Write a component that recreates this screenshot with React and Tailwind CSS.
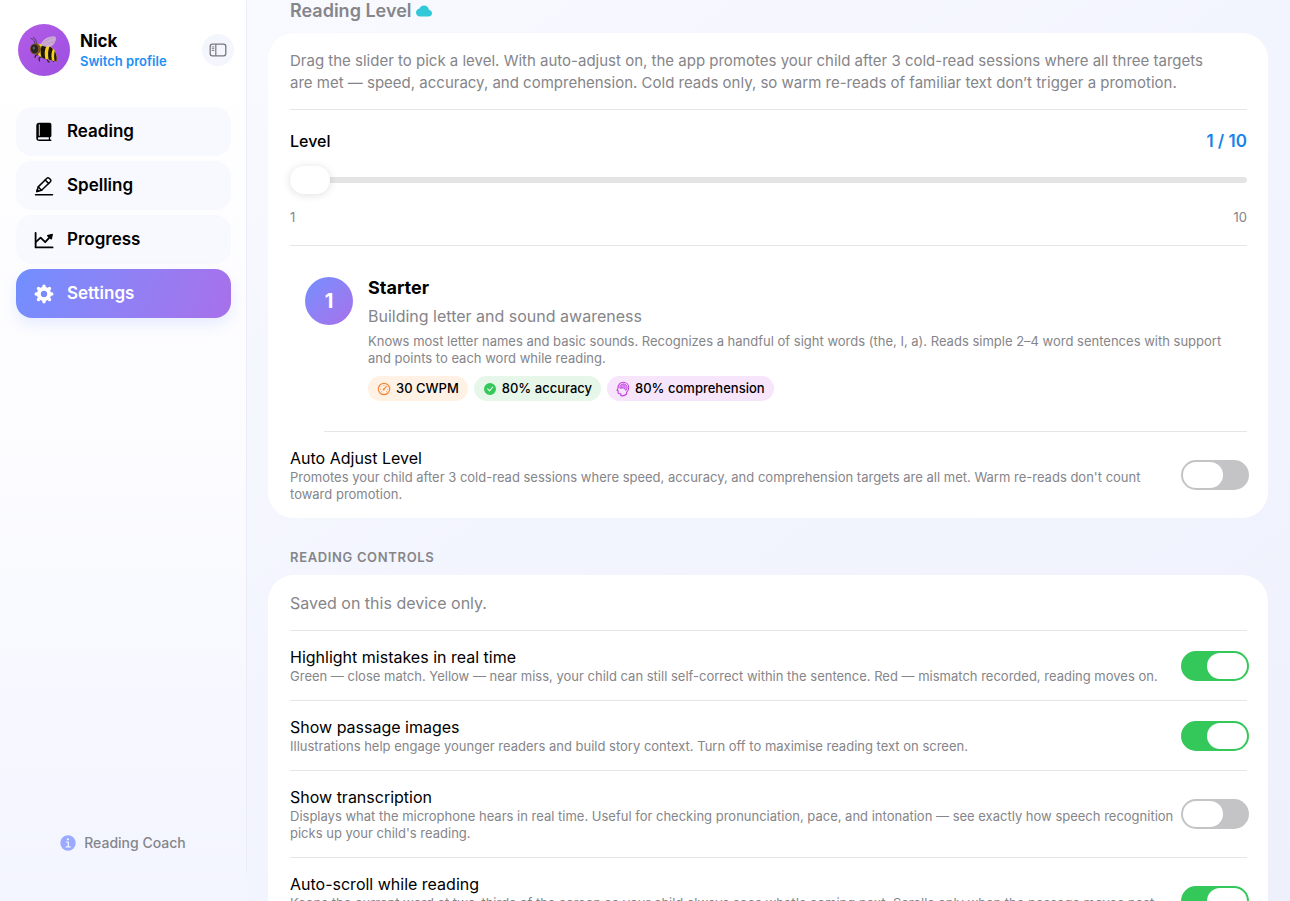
import { useState } from "react";
import { BsCheckCircleFill } from "react-icons/bs";
import { IoCloud } from "react-icons/io5";

function BeeIcon() {
  return (
    <svg viewBox="0 0 32 32" className="size-8" aria-hidden="true">
      <path d="M7 11.500C7 8.500 6.500 5 3 4.500M8.500 10.500C8.500 7.500 8 4.500 5.500 3.500" fill="none" stroke="#4b3a5c" strokeWidth="0.9" strokeLinecap="round" />
      <g stroke="#33250f" strokeWidth="1.200" strokeLinecap="round" strokeLinejoin="round" fill="none">
        <path d="M10 20.500l-2.500 1-.5 2" />
        <path d="M13 22.500l-2 2 .5 2.500" />
        <path d="M19 24l.5 2.500 1.500 1.500" />
        <path d="M24 25.500l1.500 2" />
      </g>
      <path d="M10 10.500C15 8.500 22 11 26 15.500c2.200 3.200 3.200 7.500 2.500 12-3.500-.6-6-1.400-10-2.400C13 23.500 9.500 21.500 9 18z" fill="#f6cf1c" />
      <path d="M14.500 10.200c2 .2 3.200.8 4.200 1.600-2.300 3.500-2.500 8.500-1.300 13.100-1.600-.5-2.800-1-4-1.700-1.400-4.600-1-9.200 1.100-13z" fill="#1d160e" />
      <path d="M21.600 12.300c1.300.9 2.300 1.700 3.300 2.800-1.600 3-1.800 7-1 11.200l-3.300-.8c-.9-4.800-.7-9.100 1-13.200z" fill="#1d160e" />
      <path d="M26.800 17.100c1.700 3.200 2.200 6.900 1.700 10.400l-2-.5c-.6-3.300-.6-6.900.3-9.900z" fill="#2a1d10" />
      <ellipse cx="7.500" cy="15" rx="5.500" ry="5.600" fill="#7a5420" />
      <ellipse cx="6.500" cy="15" rx="3.600" ry="4.400" fill="#2a2622" />
      <ellipse cx="5.800" cy="14" rx="1.200" ry="1.600" fill="#5f6361" />
      <path d="M12.500 10.800C14.500 5.500 20 2.300 25.500 2.200c2.300 0 2.800 1.600 2.200 3.800-.8 3-2.200 5.500-5.200 6.500-3.300.9-7.500.2-10-1.700z" fill="#cfb3d6" fillOpacity="0.92" />
      <path d="M14 10.500c3-3.800 7-6 12-6.800M17 11.500c3-2 6-3.200 9.500-3.700" stroke="#b08fc0" strokeWidth="0.600" fill="none" />
    </svg>
  );
}

function SidebarIcon() {
  return (
    <svg viewBox="0 0 18 14" className="h-3.5 w-[18px] text-[#77777c]" fill="none" stroke="currentColor" aria-hidden="true">
      <rect x="1.200" y="1.200" width="15.600" height="11.600" rx="2.200" strokeWidth="1.300" />
      <path d="M6.800 1.200v11.600" strokeWidth="1.200" />
      <path d="M3.200 3.900h1.700M3.200 5.700h1.700M3.200 7.500h1.700" strokeWidth="0.900" strokeLinecap="round" />
    </svg>
  );
}

function BookIcon() {
  return (
    <svg viewBox="0 0 20 20" className="size-5" aria-hidden="true">
      <path d="M5.200.8h10.200c1.300 0 2 .8 2 2v10.600c0 1-.4 1.500-1.300 1.700v2.500h.6c.5 0 .8.300.8.700s-.3.700-.8.700H5.300c-1.800 0-3-1.100-3-2.800V3.700c0-1.900 1-2.900 2.900-2.900z" fill="currentColor" />
      <path d="M5.500 15.300h9.300v2.300H5.400c-.9 0-1.500-.4-1.500-1.200 0-.7.600-1.100 1.600-1.100z" fill="#f8f9ff" />
      <path d="M5.300 2.800v10.600" stroke="#f8f9ff" strokeWidth="0.900" strokeLinecap="round" />
    </svg>
  );
}

function PencilIcon() {
  return (
    <svg viewBox="0 0 20 20" className="size-5" fill="none" stroke="currentColor" strokeWidth="1.500" strokeLinejoin="round" strokeLinecap="round" aria-hidden="true">
      <path d="M2.800 15.600l1.400-4.700L12.900 2.200c.7-.7 1.500-.7 2.200 0l1.300 1.300c.7.7.7 1.500 0 2.200L7.600 14.300z" />
      <path d="M11.200 4l3.400 3.400M4.300 11l3.200 3.200" />
      <path d="M2.800 15.600l.5-1.900 1.300 1.400z" fill="currentColor" />
      <path d="M1.500 18.700h17" />
    </svg>
  );
}

function TrendIcon() {
  return (
    <svg viewBox="0 0 20 20" className="size-5" fill="none" stroke="currentColor" strokeWidth="1.800" strokeLinejoin="round" strokeLinecap="round" aria-hidden="true">
      <path d="M1.600 2.800v14.600h17" />
      <path d="M2 11.800l4.600-4.100 4.600 4.500 4.800-5.400" />
      <path d="M13.600 5.700l4.700-1.400-.9 4.700z" fill="currentColor" strokeWidth="1.200" />
    </svg>
  );
}

function GearIcon() {
  return (
    <svg viewBox="0 0 20 20" className="size-5" fill="none" stroke="currentColor" aria-hidden="true">
      <circle cx="10" cy="10" r="5.200" strokeWidth="4" />
      <path d="M10 2.200v2.400M10 15.400v2.400M2.200 10h2.400M15.400 10h2.400M4.480 4.480l1.700 1.700M13.820 13.820l1.700 1.700M15.520 4.480l-1.700 1.700M6.180 13.820l-1.700 1.700" strokeWidth="3.400" strokeLinecap="round" />
    </svg>
  );
}

function InfoIcon() {
  return (
    <svg viewBox="0 0 16 16" className="size-4" aria-hidden="true">
      <circle cx="8" cy="8" r="7.700" fill="#9aabff" />
      <circle cx="7.900" cy="4.300" r="1.100" fill="#f5f7ff" />
      <path d="M6.400 7h1.900v4.700M6.200 11.900h4" fill="none" stroke="#f5f7ff" strokeWidth="1.200" strokeLinecap="round" strokeLinejoin="round" />
    </svg>
  );
}

function GaugeIcon() {
  return (
    <svg viewBox="0 0 14 14" className="size-3.5 text-[#f68a3c]" fill="none" stroke="currentColor" strokeLinecap="round" aria-hidden="true">
      <circle cx="7" cy="7" r="5.700" strokeWidth="1.200" />
      <path d="M6.700 7.400l2.700-3" strokeWidth="1.300" />
      <circle cx="6.600" cy="7.600" r="1" fill="currentColor" stroke="none" />
      <path d="M3.400 7.300h.2M4.300 4.600l.1.100M6.900 3.400v.1M10.500 7.300h.1M4.300 9.800l.1-.1M9.700 9.800l-.1-.1" strokeWidth="0.900" />
    </svg>
  );
}

function HeadIcon() {
  return (
    <svg viewBox="0 0 14 16" className="h-4 w-3.5 text-[#c03fe0]" fill="none" stroke="currentColor" strokeLinecap="round" strokeLinejoin="round" aria-hidden="true">
      <path d="M10.600 11.300v1.700c-1.500 1.400-3.600 2.100-5.800 1.700v-2H3.300c-.8 0-1.200-.4-1.200-1.200V9.800L1 9.200l1.100-2.100C2 3.600 4.200 1.300 7.300 1.300c3.200 0 5.400 2.200 5.400 5.200 0 2-.8 3.600-2.100 4.800z" strokeWidth="1.100" />
      <path d="M3.800 6.900c-.4-2 .9-3.800 3.500-4 2.300 0 3.900 1.600 3.900 3.500 0 1.300-.5 2.300-1.400 3.100L8.300 7.200z" fill="#e09af1" strokeWidth="0.800" />
      <path d="M5.800 3.600v3.200M7.900 3v2.200l1.600.9" strokeWidth="0.600" />
    </svg>
  );
}

function NavItem({ icon, label, active }) {
  return (
    <a
      href="#"
      aria-current={active ? "page" : undefined}
      className={
        active
          ? "flex h-[49px] items-center gap-[13px] rounded-2xl bg-linear-110 from-[#718fff] to-[#a770ea] px-[18px] text-[17px] font-semibold text-white shadow-[0_6px_14px_rgba(113,143,255,0.16)]"
          : "flex h-[49px] items-center gap-[13px] rounded-2xl bg-[#f8f9ff] px-[18px] text-[17px] font-semibold text-black"
      }
    >
      {icon}
      {label}
    </a>
  );
}

function Chip({ className, icon, children }) {
  return (
    <li className={`flex h-[25px] items-center gap-[5px] rounded-full px-[9px] text-[13px] font-medium text-black ${className}`}>
      {icon}
      {children}
    </li>
  );
}

function ToggleRow({ id, title, children, defaultChecked, last }) {
  const [on, setOn] = useState(Boolean(defaultChecked));
  return (
    <div className={`flex items-center justify-between gap-1.5 py-[15px] ${last ? "" : "border-b border-[#e6e6e8]"}`}>
      <div className="min-w-0 flex-1">
        <label htmlFor={id} className="block text-base leading-[22px] text-black">
          {title}
        </label>
        <p id={`${id}-hint`} className="text-[13px] leading-[17px] text-[#85858a]">
          {children}
        </p>
      </div>
      <input
        id={id}
        type="checkbox"
        role="switch"
        aria-describedby={`${id}-hint`}
        checked={on}
        onChange={(e) => setOn(e.target.checked)}
        className="-mr-0.5 flex h-[30px] w-[68px] shrink-0 appearance-none rounded-full bg-[#c4c4c6] p-0.5 before:h-[26px] before:w-10 before:rounded-full before:bg-white checked:justify-end checked:bg-[#34c759]"
      />
    </div>
  );
}

export default function App() {
  const [level, setLevel] = useState(1);
  return (
    <div className="flex h-screen overflow-hidden bg-linear-to-br from-[#fafbff] via-[#f3f5fe] to-[#eef0fc] font-[Inter,sans-serif]">
      <aside className="flex w-[247px] shrink-0 flex-col bg-linear-to-b from-white via-[#fcfcff] to-[#f3f5ff]">
        <div className="mb-7 flex flex-1 flex-col border-r border-[#eaecf8]">
          <div className="flex items-center pt-6 pr-3 pl-[18px]">
            <div className="flex size-[52px] items-center justify-center rounded-full bg-linear-to-br from-[#b35ce8] to-[#9c4fe0]">
              <BeeIcon />
            </div>
            <div className="ml-2.5 flex-1">
              <p className="text-[17px] leading-[22px] font-bold text-black">Nick</p>
              <a href="#" className="block text-[13px] leading-[18px] font-semibold text-[#1d8ff5]">
                Switch profile
              </a>
            </div>
            <button type="button" aria-label="Toggle sidebar" className="flex size-8 items-center justify-center rounded-full bg-[#f4f6fe]">
              <SidebarIcon />
            </button>
          </div>
          <nav className="mt-[31px] flex flex-col gap-[5px] pr-[15px] pl-4">
            <NavItem icon={<BookIcon />} label="Reading" />
            <NavItem icon={<PencilIcon />} label="Spelling" />
            <NavItem icon={<TrendIcon />} label="Progress" />
            <NavItem icon={<GearIcon />} label="Settings" active />
          </nav>
          <p className="mt-auto mb-5 flex items-center justify-center gap-2 text-sm font-medium text-[#85858c]">
            <InfoIcon />
            Reading Coach
          </p>
        </div>
      </aside>

      <main className="min-w-0 flex-1 overflow-hidden pr-[22px] pl-[21px]">
        <h2 className="flex h-[33px] items-start gap-1 pl-[22px] text-lg leading-[22px] font-semibold text-[#85858a]">
          Reading Level
          <IoCloud className="mt-[3px] size-4 text-[#32c8d8]" aria-hidden="true" />
        </h2>
        <section className="rounded-[26px] bg-white pr-[21px] pl-[22px]">
          <p className="border-b border-[#e6e6e8] pt-[17px] pr-6 pb-[15px] text-[15px] leading-[22px] text-[#85858a]">
            Drag the slider to pick a level. With auto-adjust on, the app promotes your child after 3 cold-read sessions where all three targets are met — speed, accuracy, and comprehension. Cold reads only, so warm re-reads of familiar text don’t trigger a promotion.
          </p>
          <div className="border-b border-[#e6e6e8] pt-5 pb-[19px]">
            <div className="flex justify-between leading-[22px]">
              <label htmlFor="level" className="text-base leading-[22px] font-medium text-black">
                Level
              </label>
              <output htmlFor="level" className="text-[17px] leading-[22px] font-semibold text-[#1a83e8]">
                {level} / 10
              </output>
            </div>
            <input
              id="level"
              type="range"
              min="1"
              max="10"
              value={level}
              onChange={(e) => setLevel(Number(e.target.value))}
              className="mt-3.5 block h-7 w-full appearance-none bg-transparent [&::-webkit-slider-runnable-track]:h-1.5 [&::-webkit-slider-runnable-track]:rounded-full [&::-webkit-slider-runnable-track]:bg-[#e4e4e4] [&::-webkit-slider-thumb]:-mt-[11px] [&::-webkit-slider-thumb]:h-7 [&::-webkit-slider-thumb]:w-10 [&::-webkit-slider-thumb]:appearance-none [&::-webkit-slider-thumb]:rounded-full [&::-webkit-slider-thumb]:bg-white [&::-webkit-slider-thumb]:shadow-[0_1px_8px_rgba(0,0,0,0.13)]"
            />
            <div className="mt-3.5 flex justify-between text-[13px] leading-[18px] text-[#85858a]">
              <span>1</span>
              <span>10</span>
            </div>
          </div>
          <div className="flex pt-[30px] pr-4 pb-[30px] pl-[15px]">
            <div className="mt-px flex size-12 shrink-0 items-center justify-center rounded-full bg-linear-to-br from-[#718fff] to-[#a770ea] text-xl font-bold text-white">
              {level}
            </div>
            <div className="ml-[15px] min-w-0">
              <h3 className="text-lg leading-6 font-bold text-black">Starter</h3>
              <p className="mt-[5px] text-base leading-[22px] text-[#85858a]">Building letter and sound awareness</p>
              <p className="mt-1.5 text-[13px] leading-[17px] text-[#85858a]">
                Knows most letter names and basic sounds. Recognizes a handful of sight words (the, I, a). Reads simple 2–4 word sentences with support and points to each word while reading.
              </p>
              <ul className="mt-[9px] flex gap-1.5">
                <Chip className="bg-[#fff1e4]" icon={<GaugeIcon />}>30 CWPM</Chip>
                <Chip className="bg-[#e6f7ea]" icon={<BsCheckCircleFill className="size-3.5 p-px text-[#34c759]" aria-hidden="true" />}>80% accuracy</Chip>
                <Chip className="bg-[#f7e5fc]" icon={<HeadIcon />}>80% comprehension</Chip>
              </ul>
            </div>
          </div>
          <hr className="ml-[34px] border-[#e6e6e8]" />
          <ToggleRow id="auto-adjust" title="Auto Adjust Level" last>
            Promotes your child after 3 cold-read sessions where speed, accuracy, and comprehension targets are all met. Warm re-reads don't count toward promotion.
          </ToggleRow>
        </section>

        <h2 className="mt-[30px] mb-[9px] pl-[22px] text-[13px] leading-[18px] font-semibold tracking-wider text-[#85858a] uppercase">
          Reading Controls
        </h2>
        <section className="rounded-t-[26px] bg-white pr-[21px] pl-[22px]">
          <p className="border-b border-[#e6e6e8] pt-[17px] pb-4 text-base leading-[22px] text-[#85858a]">Saved on this device only.</p>
          <ToggleRow id="highlight" title="Highlight mistakes in real time" defaultChecked>
            Green — close match. Yellow — near miss, your child can still self-correct within the sentence. Red — mismatch recorded, reading moves on.
          </ToggleRow>
          <ToggleRow id="images" title="Show passage images" defaultChecked>
            Illustrations help engage younger readers and build story context. Turn off to maximise reading text on screen.
          </ToggleRow>
          <ToggleRow id="transcription" title="Show transcription">
            Displays what the microphone hears in real time. Useful for checking pronunciation, pace, and intonation — see exactly how speech recognition picks up your child's reading.
          </ToggleRow>
          <ToggleRow id="autoscroll" title="Auto-scroll while reading" defaultChecked last>
            Keeps the current word at two-thirds of the screen so your child always sees what's coming next. Scrolls only when the passage moves past the visible area of the page.
          </ToggleRow>
        </section>
      </main>
    </div>
  );
}
